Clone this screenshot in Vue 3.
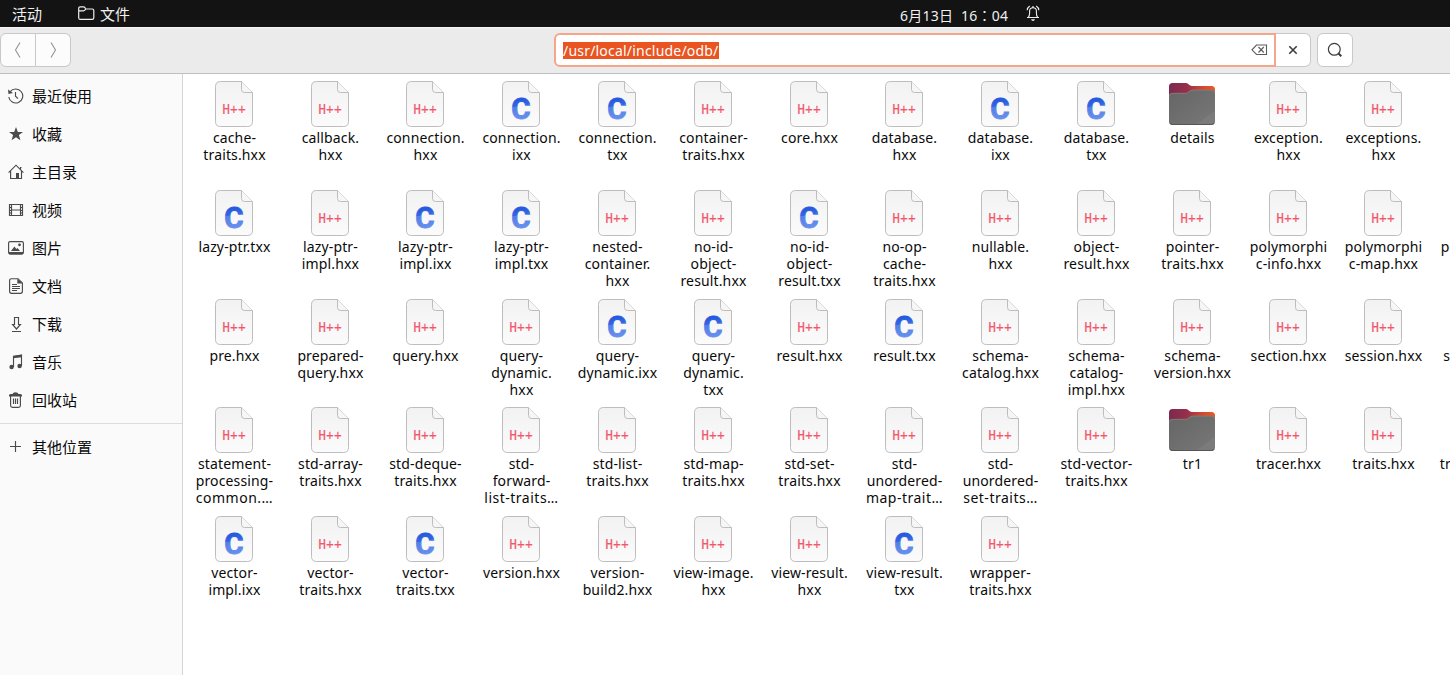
<script setup>
const places = [
  { icon: 'recent', name: '最近使用' },
  { icon: 'star', name: '收藏' },
  { icon: 'home', name: '主目录' },
  { icon: 'video', name: '视频' },
  { icon: 'image', name: '图片' },
  { icon: 'doc', name: '文档' },
  { icon: 'down', name: '下载' },
  { icon: 'music', name: '音乐' },
  { icon: 'trash', name: '回收站' },
]

// kind letter (h: header, c: source, d: folder), then the label's lines
const rows = [
  ['h|cache-|traits.hxx', 'h|callback.|hxx', 'h|connection.|hxx', 'c|connection.|ixx', 'c|connection.|txx', 'h|container-|traits.hxx', 'h|core.hxx', 'h|database.|hxx', 'c|database.|ixx', 'c|database.|txx', 'd|details', 'h|exception.|hxx', 'h|exceptions.|hxx'],
  ['c|lazy-ptr.txx', 'h|lazy-ptr-|impl.hxx', 'c|lazy-ptr-|impl.ixx', 'c|lazy-ptr-|impl.txx', 'h|nested-|container.|hxx', 'h|no-id-|object-|result.hxx', 'c|no-id-|object-|result.txx', 'h|no-op-|cache-|traits.hxx', 'h|nullable.|hxx', 'h|object-|result.hxx', 'h|pointer-|traits.hxx', 'h|polymorphi|c-info.hxx', 'h|polymorphi|c-map.hxx', 'h|polymorphi|c-object-'],
  ['h|pre.hxx', 'h|prepared-|query.hxx', 'h|query.hxx', 'h|query-|dynamic.|hxx', 'c|query-|dynamic.ixx', 'c|query-|dynamic.|txx', 'h|result.hxx', 'c|result.txx', 'h|schema-|catalog.hxx', 'h|schema-|catalog-|impl.hxx', 'h|schema-|version.hxx', 'h|section.hxx', 'h|session.hxx', 'h|statement.|hxx'],
  ['h|statement-|processing-|common.…', 'h|std-array-|traits.hxx', 'h|std-deque-|traits.hxx', 'h|std-|forward-|list-traits…', 'h|std-list-|traits.hxx', 'h|std-map-|traits.hxx', 'h|std-set-|traits.hxx', 'h|std-|unordered-|map-trait…', 'h|std-|unordered-|set-traits…', 'h|std-vector-|traits.hxx', 'd|tr1', 'h|tracer.hxx', 'h|traits.hxx', 'h|transaction.|hxx'],
  ['c|vector-|impl.ixx', 'h|vector-|traits.hxx', 'c|vector-|traits.txx', 'h|version.hxx', 'h|version-|build2.hxx', 'h|view-image.|hxx', 'h|view-result.|hxx', 'c|view-result.|txx', 'h|wrapper-|traits.hxx'],
].map((row) => row.map((item) => {
  const [kind, ...lines] = item.split('|')
  return { kind, lines }
}))
</script>

<template>
  <div class="screen">
    <svg class="defs" width="0" height="0">
      <defs>
        <linearGradient id="paper" x1="0" y1="0" x2="0" y2="1">
          <stop offset="0" stop-color="#f2f2f2" /><stop offset="1" stop-color="#fbfbfb" />
        </linearGradient>
        <linearGradient id="cfill" gradientUnits="userSpaceOnUse" x1="17" y1="16" x2="21" y2="40">
          <stop offset="0" stop-color="#1f55dc" /><stop offset=".36" stop-color="#3566e2" />
          <stop offset=".38" stop-color="#527fe6" /><stop offset="1" stop-color="#6a92ee" />
        </linearGradient>
        <linearGradient id="back" x1="0" y1="0" x2="1" y2="0">
          <stop offset="0" stop-color="#7c2950" /><stop offset=".4" stop-color="#96304a" />
          <stop offset=".75" stop-color="#d64a2e" /><stop offset="1" stop-color="#ea5a24" />
        </linearGradient>
        <linearGradient id="front" x1="0" y1="0" x2="1" y2="1">
          <stop offset="0" stop-color="#656565" /><stop offset=".79" stop-color="#747474" />
          <stop offset=".8" stop-color="#7b7b7b" /><stop offset="1" stop-color="#7b7b7b" />
        </linearGradient>
      </defs>
    </svg>

    <header class="topbar">
      <span class="activities">活动</span>
      <svg class="app-icon" width="17" height="15" viewBox="0 0 17 15">
        <path d="M.7 11.7V2.2Q.7.8 2.1.8H5.6Q7 .8 7.2 2.2Q7.4 3 8.4 3H14.3Q15.8 3 15.8 4.4V11.7Q15.8 13.4 14.2 13.4H2.3Q.7 13.4.7 11.7ZM.8 4.9H5.4Q7 4.9 7.5 3.2" />
      </svg>
      <span class="app">文件</span>
      <span class="clock">6月13日&nbsp; 16<span class="colon">：</span>04</span>
      <svg class="bell" width="14" height="17" viewBox="0 0 14 17">
        <path d="M1 12.5H13M2.3 12.3Q3.6 11 3.6 8V6Q3.6 2.7 7 2.7Q10.4 2.7 10.4 6V8Q10.4 11 11.7 12.3M1.2 5.3Q1.3 2.5 3.8 1M12.8 5.3Q12.7 2.5 10.2 1M6.2 1.8H7.8" />
        <path class="clapper" d="M5 14.2H9Q8.5 16 7 16Q5.5 16 5 14.2Z" />
      </svg>
    </header>

    <div class="toolbar">
      <div class="nav">
        <button><svg width="8" height="18" viewBox="0 0 8 18"><path d="M6 1.5L1.5 9L6 16.5" /></svg></button>
        <button><svg width="8" height="18" viewBox="0 0 8 18"><path d="M2 1.5L6.5 9L2 16.5" /></svg></button>
      </div>
      <div class="location">
        <div class="entry">
          <span class="path">/usr/local/include/odb/</span>
          <svg width="17" height="12" viewBox="0 0 17 12">
            <path d="M5.5 1H15.5V10.5H5.5L1 5.8Z" /><path class="cross" d="M7.5 3L12.8 8.5M12.8 3L7.5 8.5" />
          </svg>
        </div>
        <button class="close"><svg width="10" height="10" viewBox="0 0 10 10"><path d="M1.3 1.3L8.7 8.7M8.7 1.3L1.3 8.7" /></svg></button>
      </div>
      <button class="search"><svg width="16" height="16" viewBox="0 0 16 16"><circle cx="7.3" cy="7.3" r="5.9" /><path d="M11.5 11.5L14.3 14.3" /></svg></button>
    </div>

    <div class="body">
      <aside class="sidebar">
        <div v-for="p in places" :key="p.icon" class="place">
          <svg width="16" height="16" viewBox="0 0 16 16">
            <template v-if="p.icon === 'recent'">
              <path d="M2.2 3.7A7 7 0 1 1 .8 9" /><path d="M7.5 4V8.2L10 10.7" /><path class="fill" d="M0 1.5L.5 6L5 5Z" />
            </template>
            <path v-else-if="p.icon === 'star'" class="fill" d="M8 1L9.8 6H15L10.9 9.1L12.4 14.2L8 11.2L3.6 14.2L5.1 9.1L1 6H6.2Z" />
            <template v-else-if="p.icon === 'home'">
              <path d="M.6 8.7L8 1.2L15.4 8.7M2.6 7V14.5H13.5V7M12.5 5.4V3.5H13.5" /><path class="fill" d="M8 9H11V15H8Z" />
            </template>
            <template v-else-if="p.icon === 'video'">
              <path d="M3.5 2V14M12.5 2V14M3.5 2.5H12.5M3.5 8H12.5M3.5 13.5H12.5M1.5 2V14M14.5 2V14" /><path d="M1 2.5H3.5M1 5.5H3.5M1 8.5H3.5M1 11H3.5M1 13.5H3.5M12.5 2.5H15M12.5 5.5H15M12.5 8.5H15M12.5 11H15M12.5 13.5H15" />
            </template>
            <template v-else-if="p.icon === 'image'">
              <rect x=".6" y="1.6" width="14.8" height="12.3" rx="1.5" /><path class="fill" d="M1 12H15Q15.4 14.5 14 14.5H2Q.6 14.5 1 12ZM3 11L6.4 6.5L8.3 9L9.5 8L12 11Z" /><circle class="fill" cx="11.5" cy="4.8" r="1.4" />
            </template>
            <template v-else-if="p.icon === 'doc'">
              <path d="M1.6 2.7Q1.6.7 3.5.7H10L14.4 5.1V13.3Q14.4 15.3 12.5 15.3H3.5Q1.6 15.3 1.6 13.3Z" /><path d="M4 6.5H9M4 8.5H12M4 10.5H12M4 12.5H9" /><path class="fill" d="M9.3.7L14.3 5.5H9.3Z" />
            </template>
            <path v-else-if="p.icon === 'down'" d="M6.5 1.5H10.5V8.5H12.4L8.5 13L4.6 8.5H6.5ZM4 15.5H13" />
            <template v-else-if="p.icon === 'music'">
              <path d="M5.5 13V2.7L13.5 1.3V12" /><path class="fill" d="M5 1.7L14 .4V3.3L5 4.3Z" /><circle class="fill" cx="3.6" cy="13" r="2.2" /><circle class="fill" cx="11.6" cy="12" r="2.2" />
            </template>
            <template v-else>
              <path d="M2.6 4V13.5Q2.6 15.4 4.5 15.4H10.5Q12.4 15.4 12.4 13.5V4M5.5 6.5V12M7.5 6.5V12M9.5 6.5V12" /><path class="fill" d="M1 3.3Q1.2 2 3 2H4.5Q5 .3 7.5 .3Q10 .3 10.5 2H12Q13.8 2 14 3.3V4.5H1Z" />
            </template>
          </svg>
          <span>{{ p.name }}</span>
        </div>
        <div class="rule"></div>
        <div class="place">
          <svg width="16" height="16" viewBox="0 0 16 16"><path d="M2 7.5H13M7.5 2V13" /></svg>
          <span>其他位置</span>
        </div>
      </aside>

      <main class="files">
        <template v-for="(row, r) in rows" :key="r">
          <div v-for="(f, i) in row" :key="i" class="file" :class="{ first: i === 0 }">
            <svg v-if="f.kind === 'd'" class="thumb" width="46" height="46" viewBox="0 0 46 46">
              <path fill="url(#back)" d="M0 15V5.5Q0 2 3.5 2H16.5Q18.5 2 19.5 3.2Q21 5 23 5H42.5Q46 5 46 8.5V15Z" />
              <path fill="url(#front)" d="M0 15.5Q0 12 3.5 12H16.5Q18.5 12 20 10.5Q21.8 8.8 24 8.8H42.5Q46 8.8 46 12.3V40.5Q46 44 42.5 44H3.5Q0 44 0 40.5Z" />
              <path fill="none" stroke="#8f8482" stroke-width=".7" d="M.3 15.5Q.3 12.3 3.5 12.3H16.5Q18.5 12.3 20 10.8Q21.8 9.1 24 9.1H42.5Q45.7 9.1 45.7 12.3" />
              <path fill="none" stroke="#555" d="M1 42Q2 43.5 3.5 43.5H42.5Q44 43.5 45 42" />
            </svg>
            <svg v-else class="thumb" width="38" height="46" viewBox="0 0 38 46">
              <path fill="url(#paper)" stroke="#bdbdbd" d="M5.5.5H26.5L37.5 11.5V40.5Q37.5 45.5 32.5 45.5H5.5Q.5 45.5.5 40.5V5.5Q.5.5 5.5.5Z" />
              <path fill="#f7f6f5" stroke="#bdbdbd" d="M26.5.5V8.5Q26.5 11.5 29.5 11.5H37.5" />
              <text v-if="f.kind === 'c'" class="c" x="19" y="38.4">C</text>
              <g v-else transform="translate(7.3 33) scale(.87 1)"><text class="hpp">H++</text></g>
            </svg>
            <div class="label">
              <div v-for="(l, k) in f.lines" :key="k" :class="{ cut: l.endsWith('…') }">{{ l }}</div>
            </div>
          </div>
        </template>
      </main>
    </div>
  </div>
</template>

<style>
html, body { background: #fff; overflow: hidden; }
</style>

<style scoped>
.screen { width: 1450px; height: 683px; overflow: hidden; display: flex; flex-direction: column; font: 15px/20px "Noto Sans", "Noto Sans CJK SC", sans-serif; color: #0a0a0a; }
.defs { position: absolute; }
svg { flex: none; display: block; fill: none; }
button { font: inherit; padding: 0; margin: 0; background: #fcfcfc; border: 1px solid #c8c8c8; display: flex; align-items: center; justify-content: center; box-sizing: border-box; }

.topbar { height: 27px; flex: none; background: #131313; color: #f0f0f0; display: flex; align-items: center; padding-top: 1px; box-sizing: border-box; font-family: "Noto Sans CJK SC", sans-serif; }
.activities { width: 65px; margin-left: 12px; }
.app-icon { stroke: #eee; stroke-width: 1.2; margin-top: -1px; margin-left: 1px; }
.app { margin-left: 5px; width: 800px; flex: none; }
.clock { width: 126px; flex: none; font-size: 14px; letter-spacing: .25px; font-family: "Noto Sans", "Noto Sans CJK SC", sans-serif; white-space: nowrap; padding-top: 2px; }
.colon { font-family: "Noto Sans CJK TC", sans-serif; }
.bell { stroke: #eee; stroke-width: 1.1; margin-top: -2px; }
.clapper { fill: #eee; stroke: none; }

.toolbar { height: 47px; flex: none; background: #ebebeb; border-top: 1px solid #f7f7f7; border-bottom: 1px solid #bfbfbf; box-sizing: border-box; display: flex; align-items: flex-start; padding-top: 5px; }
.nav { display: flex; width: 71px; height: 34px; }
.nav button { width: 36px; height: 34px; border-radius: 6px 0 0 6px; }
.nav button + button { border-left: 0; width: 35px; border-radius: 0 6px 6px 0; }
.nav svg { stroke: #929292; stroke-width: 1.1; }
.location { display: flex; margin-left: 483px; height: 34px; }
.entry { width: 722px; height: 34px; box-sizing: border-box; border: 2px solid #f5a58a; border-radius: 6px 0 0 6px; background: #fff; display: flex; align-items: center; justify-content: space-between; padding: 0 6px 0 7px; }
.entry svg { stroke: #5c5c5c; stroke-width: 1.1; }
.path { background: #e95420; color: #fff; font-size: 14px; line-height: 17px; letter-spacing: .2px; white-space: nowrap; }
.close { width: 35px; height: 34px; border-left: 0; border-radius: 0 6px 6px 0; background: #fff; }
.close svg { stroke: #3d3d3d; stroke-width: 1.6; }
.search { width: 36px; height: 34px; margin-left: 6px; border-radius: 6px; background: #fff; }
.search svg { stroke: #3d3d3d; stroke-width: 1.2; }
.search path { stroke-width: 2; }

.body { display: flex; height: 601px; flex: none; }
.sidebar { width: 183px; box-sizing: border-box; flex: none; background: #fafafa; border-right: 1px solid #d5d5d5; padding-top: 3px; }
.place { height: 38px; display: flex; align-items: center; padding-left: 8px; gap: 8px; font-family: "Noto Sans CJK SC", sans-serif; }
.place svg { stroke: #4a4a4a; stroke-width: 1.15; }
.place .fill { fill: #4a4a4a; stroke: none; }
.rule { height: 1px; background: #dcdcdc; margin: 4px 0; }

.files { flex: 1; min-width: 0; overflow: hidden; padding: 7px 0 0 3px; display: grid; align-content: start; grid-template-columns: 96px 95px 96px 96px 96px 96px 95px 96px 96px 96px 96px 95px 96px 96px; grid-template-rows: 109px 109px 108px 109px 109px; }
.file { width: 96px; display: flex; flex-direction: column; align-items: center; }
.first { grid-column-start: 1; }
.label { margin-top: 2px; font-size: 14px; line-height: 17px; letter-spacing: .14px; text-align: center; white-space: nowrap; padding-left: 1px; }
.cut { letter-spacing: .5px; }
.hpp { font: 15px "Liberation Mono", monospace; fill: #f2566b; stroke: #f2566b; stroke-width: .2; }
.c { font: 700 29.5px Roboto, sans-serif; fill: url(#cfill); stroke: url(#cfill); stroke-width: .9; text-anchor: middle; }
</style>
